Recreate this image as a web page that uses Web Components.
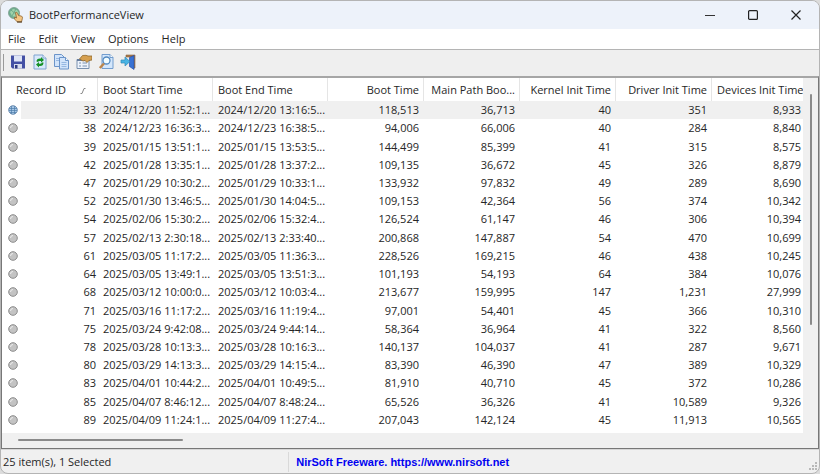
<!DOCTYPE html>
<html lang="en">
<head>
<meta charset="utf-8">
<meta name="viewport" content="width=device-width, initial-scale=1">
<title>BootPerformanceView</title>
<style>
  html, body { height: 100%; }
  body {
    margin: 0;
    background: #dcdcdc;
    color: #262626;
    font: 11px/16px "Open Sans", "Noto Sans", sans-serif;
  }
</style>
</head>
<body>
<app-window>
  <title-bar>BootPerformanceView</title-bar>
  <menu-bar></menu-bar>
  <tool-bar></tool-bar>
  <record-list></record-list>
  <status-bar>
    <span slot="count">25 item(s), 1 Selected</span>
    <span slot="credit">NirSoft Freeware. https://www.nirsoft.net</span>
  </status-bar>
</app-window>

<script>
class AppWindow extends HTMLElement {
  constructor() {
    super();
    this.attachShadow({ mode: "open" }).innerHTML = `
    <style>
      :host {
        display: flex;
        flex-direction: column;
        box-sizing: border-box;
        height: 100vh;
        border: 1px solid #b4b4b4;
        border-radius: 8px;
        background: #f0f0f0;
        overflow: hidden;
      }
    </style>
    <slot></slot>
    `;
  }
}

class TitleBar extends HTMLElement {
  constructor() {
    super();
    this.attachShadow({ mode: "open" }).innerHTML = `
    <style>
      :host {
        display: flex;
        align-items: center;
        height: 28px;
        padding: 0 2px 0 7px;
        background: #edf2fa;
      }
      .title { flex: 1; padding-left: 5px; }
      button {
        display: flex;
        align-items: center;
        justify-content: center;
        width: 43px;
        height: 28px;
        padding: 0;
        border: 0;
        background: none;
      }
    </style>
    <svg width="16" height="16" viewBox="0 0 16 16">
      <circle cx="6" cy="6" r="5.500" fill="#6fae90" stroke="#7a9c8c" stroke-width=".8"/>
      <path d="M2 5l3-3 4 1 2 3-3 4-4-1z" fill="#9fd3ab"/>
      <path d="M3 3l6 5M8 2L4 9" stroke="#62a183" stroke-width=".8"/>
      <path d="M7.500 5.500q1.500-.8 2 .8l1 2.200 3 .6q1.300.7.9 2.300l-.9 3.500H9.300L6.500 12l.2-2 1.800 1z" fill="#f4c684" stroke="#8f6430" stroke-width=".8"/>
      <path d="M9 15h5" stroke="#49351f"/>
    </svg>
    <span class="title"><slot></slot></span>
    <button aria-label="Minimize"><svg width="10" height="10"><path d="M0 5.500h10" stroke="#333"/></svg></button>
    <button aria-label="Maximize"><svg width="10" height="10"><rect x=".6" y=".6" width="8.800" height="8.800" rx="1" fill="none" stroke="#222" stroke-width="1.200"/></svg></button>
    <button aria-label="Close"><svg width="10" height="10"><path d="M.5.5l9 9M9.500.5l-9 9" stroke="#222" stroke-width="1.200"/></svg></button>
    `;
  }
}

class MenuBar extends HTMLElement {
  constructor() {
    super();
    const items = ["File", "Edit", "View", "Options", "Help"];
    this.attachShadow({ mode: "open" }).innerHTML = `
    <style>
      :host {
        display: block;
        background: #fff;
        border-bottom: 1px solid #b4b4b4;
      }
      nav { display: flex; gap: 13px; height: 20px; padding-left: 7px; }
      button { padding: 0; border: 0; background: none; color: inherit; font: inherit; }
    </style>
    <nav>${items.map(item => `<button>${item}</button>`).join("")}</nav>
    `;
  }
}

class ToolBar extends HTMLElement {
  constructor() {
    super();
    const page = "M.5.5h7l3 3v9H.5z";
    const icons = {
      Save: `<path d="M1 1.500h14v13H2.500L1 13z" fill="#4450a4"/><path d="M4 1.500h8v6H4z" fill="#dfe5f6"/><path d="M4 10h8v4.500H4z" fill="#d7dcec"/><path d="M5 11h2.500v3.500H5z" fill="#303a80"/>`,
      Refresh: `<path d="M2 1h9l3 3v11H2z" fill="#d8e9fb" stroke="#7fa3d0"/><path d="M11 1v3h3" fill="#fff" stroke="#7fa3d0"/><path d="M4.500 7.500q0-3 3.500-3h1V3l3 3-3 2.500V7H8q-1.500-.2-2 1zM11.500 8.500q0 3.500-3.500 3.500H7v1.500l-3-3 3-2.500V9.700h1q1.500 0 2-1.200z" fill="#169126"/>`,
      Copy: `<g fill="#d2e4fa" stroke="#6b94c9"><path d="${page}"/><path transform="translate(5 3)" d="M.5.5h6l3 3v8.500h-9z"/><path d="M11.500 3.500v3h3" fill="#fff"/></g><path d="M7.500 8.500h5M7.500 10.500h5M7.500 12.500h5M2 4.500h3M2 6.500h3" stroke="#86acdc" stroke-width=".8"/>`,
      Properties: `<path d="M1 5.500h12v9H1z" fill="#edf3fc" stroke="#7890ae"/><path d="M1 5h12v2H1z" fill="#687e9e"/><path d="M3 9h2M3 12h2M6.500 9H11M6.500 12H11" stroke="#7890ae"/><path d="M3.500 5l3-3.500 3.500-.2L12 2h4v4l-3 .5-2 2-2-2-2 .5z" fill="#d6a050" stroke="#8f6a31" stroke-width=".8"/>`,
      Find: `<path d="M4 .5h8l3 3v11H4z" fill="#d4e7fc" stroke="#739dce"/><path d="M12 .5v3h3" fill="#fff" stroke="#739dce"/><circle cx="8.500" cy="6.500" r="3.500" fill="#f1fcff" stroke="#5389c0" stroke-width="1.300"/><path d="M6 9.500L1.800 14" stroke="#bc864c" stroke-width="2.500"/>`,
      Exit: `<path d="M6 1h9v13h-1.500V3H6z" fill="#a97a4c" stroke="#8a613b" stroke-width=".6"/><path d="M9.500 3.500l4.500-2v14l-4.500-3z" fill="#3972d4" stroke="#2850a8" stroke-width=".7"/><path d="M1 6h4V3l5 4.500L5 12V9H1z" fill="#49b4e4" stroke="#3289b8" stroke-width=".7"/>`
    };
    this.attachShadow({ mode: "open" }).innerHTML = `
    <style>
      :host {
        display: flex;
        align-items: center;
        gap: 6px;
        height: 24px;
        padding: 0 0 2px 2px;
        background: #efefef;
      }
      .grip { width: 1px; height: 17px; background: #9a9a9a; }
      button { display: block; width: 16px; height: 16px; padding: 0; border: 0; background: none; }
      svg { display: block; }
    </style>
    <span class="grip"></span>
    ${Object.entries(icons).map(([name, art]) => `
      <button aria-label="${name}"><svg width="16" height="16" viewBox="0 0 16 16">${art}</svg></button>`).join("")}
    `;
  }
}

const HEADERS = ["Record ID", "Boot Start Time", "Boot End Time", "Boot Time", "Main Path Boo...", "Kernel Init Time", "Driver Init Time", "Devices Init Time"];

const RECORDS = `
33|2024/12/20 11:52:1...|2024/12/20 13:16:5...|118,513|36,713|40|351|8,933
38|2024/12/23 16:36:3...|2024/12/23 16:38:5...|94,006|66,006|40|284|8,840
39|2025/01/15 13:51:1...|2025/01/15 13:53:5...|144,499|85,399|41|315|8,575
42|2025/01/28 13:35:1...|2025/01/28 13:37:2...|109,135|36,672|45|326|8,879
47|2025/01/29 10:30:2...|2025/01/29 10:33:1...|133,932|97,832|49|289|8,690
52|2025/01/30 13:46:5...|2025/01/30 14:04:5...|109,153|42,364|56|374|10,342
54|2025/02/06 15:30:2...|2025/02/06 15:32:4...|126,524|61,147|46|306|10,394
57|2025/02/13 2:30:18...|2025/02/13 2:33:40...|200,868|147,887|54|470|10,699
61|2025/03/05 11:17:2...|2025/03/05 11:36:3...|228,526|169,215|46|438|10,245
64|2025/03/05 13:49:1...|2025/03/05 13:51:3...|101,193|54,193|64|384|10,076
68|2025/03/12 10:00:0...|2025/03/12 10:03:4...|213,677|159,995|147|1,231|27,999
71|2025/03/16 11:17:2...|2025/03/16 11:19:4...|97,001|54,401|45|366|10,310
75|2025/03/24 9:42:08...|2025/03/24 9:44:14...|58,364|36,964|41|322|8,560
78|2025/03/28 10:13:3...|2025/03/28 10:16:3...|140,137|104,037|41|287|9,671
80|2025/03/29 14:13:3...|2025/03/29 14:15:4...|83,390|46,390|47|389|10,329
83|2025/04/01 10:44:2...|2025/04/01 10:49:5...|81,910|40,710|45|372|10,286
85|2025/04/07 8:46:12...|2025/04/07 8:48:24...|65,526|36,326|41|10,589|9,326
89|2025/04/09 11:24:1...|2025/04/09 11:27:4...|207,043|142,124|45|11,913|10,565
`.trim().split("\n").map(line => line.split("|"));

class RecordList extends HTMLElement {
  constructor() {
    super();
    this.shadowDOM = this.attachShadow({ mode: "open" });
    this.render();
  }

  dot(selected) {
    return selected
      ? `<svg width="10" height="10" viewBox="0 0 10 10"><circle cx="5" cy="5" r="4.300" fill="#a9c9e8" stroke="#6f8fb2"/><path d="M1 3.500h8M1 5.500h8M2 7.500h6M3.500 1v8M6.500 1v8" stroke="#4d7cab" stroke-width=".7"/></svg>`
      : `<svg width="10" height="10" viewBox="0 0 10 10"><circle cx="5" cy="5" r="4.300" fill="#c3c3c3" stroke="#8c8c8c"/><path d="M2.500 5q0-2.500 2.500-2.500" fill="none" stroke="#eee"/></svg>`;
  }

  row(cells, i) {
    const [id, ...rest] = cells;
    return `<tr${i === 0 ? ' class="selected" aria-selected="true"' : ""}>
      <td class="id"><div>${this.dot(i === 0)}<span>${id}</span></div></td>
      ${rest.map(text => `<td>${text}</td>`).join("")}
    </tr>`;
  }

  render() {
    this.shadowDOM.innerHTML = `
    <style>
      :host {
        flex: 1;
        display: grid;
        grid-template: minmax(0, 1fr) 15px / minmax(0, 1fr) 15px;
        border: 1px solid #777;
        border-top: 2px solid #a6a6a6;
        background: #f0f0f0;
        min-height: 0;
      }
      .view { background: #fff; padding-bottom: 4px; overflow: hidden; }
      table {
        width: 100%;
        height: 100%;
        table-layout: fixed;
        border-collapse: separate;
        border-spacing: 0;
      }
      th, td {
        padding: 0 5px;
        text-align: right;
        white-space: nowrap;
        font-weight: 400;
        line-height: 16px;
      }
      th { height: 23px; padding-right: 4px; border-right: 1px solid #e5e5e5; }
      th:nth-child(-n+3), td:nth-child(2), td:nth-child(3) { text-align: left; }
      th:nth-child(1) { padding-left: 14px; }
      th:nth-child(1) svg { margin-left: 14px; }
      th:nth-child(2), th:nth-child(3), td:nth-child(2), td:nth-child(3) { padding-left: 5px; padding-right: 0; }
      th:last-child { border-right: 0; }
      th:last-child, td:last-child { padding-right: 2px; }
      .id { padding: 0 2px 0 6px; }
      .id div { display: flex; align-items: center; justify-content: space-between; }
      .selected td { background: #f0f0f0; }
      .selected .id { background: linear-gradient(to right, #fff 19px, #f0f0f0 19px); }
      .vertical { padding: 16px 0 0 7px; }
      .vertical i { display: block; width: 2px; height: 68%; background: #8a8a8a; border-radius: 1px; }
      .horizontal { padding: 6px 0 0 16px; }
      .horizontal i { display: block; width: 21%; height: 2px; background: #8a8a8a; border-radius: 1px; }
    </style>
    <div class="view">
      <table>
        <colgroup>
          <col style="width: 96px"><col style="width: 115px"><col style="width: 115px">
          <col style="width: 96px"><col style="width: 96px"><col style="width: 96px">
          <col style="width: 96px"><col style="width: 91px">
        </colgroup>
        <thead><tr>${HEADERS.map((text, i) => `<th scope="col">${text}${i ? "" : `<svg width="6" height="6"><path d="M.5 5.500H2L4 .5h1.500" fill="none" stroke="#888"/></svg>`}</th>`).join("")}</tr></thead>
        <tbody>${RECORDS.map((cells, i) => this.row(cells, i)).join("")}</tbody>
      </table>
    </div>
    <div class="vertical"><i></i></div>
    <div class="horizontal"><i></i></div>
    `;
  }
}

class StatusBar extends HTMLElement {
  constructor() {
    super();
    this.attachShadow({ mode: "open" }).innerHTML = `
    <style>
      :host {
        display: flex;
        align-items: center;
        height: 22px;
        padding: 1px 1px 0 2px;
        border-top: 1px solid #d7d7d7;
      }
      .count { width: 35%; border-right: 1px solid #d9d9d9; line-height: 20px; }
      .credit {
        flex: 1;
        padding-left: 7px;
        color: #0000f0;
        font: bold 11px/20px "Liberation Sans", Arial, sans-serif;
      }
      svg { align-self: flex-end; }
    </style>
    <div class="count"><slot name="count"></slot></div>
    <div class="credit"><slot name="credit"></slot></div>
    <svg width="9" height="11" fill="#b8b8b8"><path d="M6 0h2v2H6zM3 3h2v2H3zM6 3h2v2H6zM0 6h2v2H0zM3 6h2v2H3zM6 6h2v2H6z"/></svg>
    `;
  }
}

customElements.define("app-window", AppWindow);
customElements.define("title-bar", TitleBar);
customElements.define("menu-bar", MenuBar);
customElements.define("tool-bar", ToolBar);
customElements.define("record-list", RecordList);
customElements.define("status-bar", StatusBar);
</script>
</body>
</html>
